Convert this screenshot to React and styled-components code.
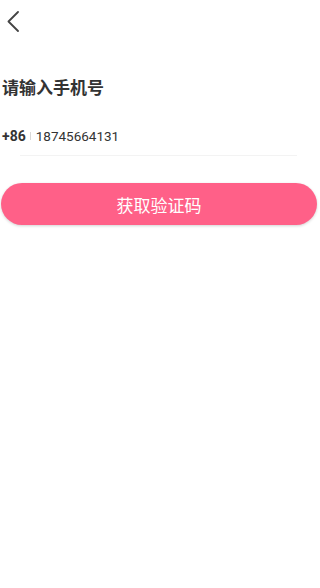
import styled, { createGlobalStyle } from "styled-components";

const Global = createGlobalStyle`
  html, body {
    margin: 0;
    padding: 0;
    background: #fff;
    font-family: Roboto, "Noto Sans CJK SC", sans-serif;
  }
`

const Page = styled.main`
  display: flex;
  flex-direction: column;
  width: 320px;
  min-height: 588px;
  background: #fff;
`

const NavBar = styled.header`
  height: 42px;
  display: flex;
  align-items: center;
  padding-left: 5px;
`

const BackButton = styled.button`
  border: none;
  background: none;
  padding: 0;
  width: 16px;
  height: 24px;
  display: flex;
  align-items: center;
  justify-content: center;
`

const Title = styled.h1`
  margin: 34px 0 0 2px;
  font-size: 17px;
  line-height: 22px;
  font-weight: bold;
  color: #333;
  font-family: "Noto Sans CJK SC", sans-serif;
`

const PhoneRow = styled.div`
  display: flex;
  align-items: center;
  margin-top: 26px;
  height: 24px;
  padding-left: 2px;
`

const Code = styled.span`
  font-size: 14px;
  font-weight: bold;
  color: #333;
`

const Sep = styled.span`
  width: 1px;
  height: 8px;
  background: #d8d8d8;
  margin: 0 5px 0 4px;
`

const Number = styled.span`
  font-size: 13.5px;
  color: #333;
`

const Underline = styled.div`
  height: 1px;
  margin: 7px 23px 0 20px;
  background: #f3f3f3;
`

const SubmitButton = styled.button`
  margin: 27px 3px 0 1px;
  height: 42px;
  border: none;
  border-radius: 21px;
  background: #ff6088;
  box-shadow: 0 1px 3px rgba(0, 0, 0, 0.18);
  color: #fff;
  font-size: 17px;
  font-family: "Noto Sans CJK SC", sans-serif;
  display: flex;
  align-items: center;
  justify-content: center;
`

export default function App() {
  return (
    <Page>
      <Global />
      <NavBar>
        <BackButton>
          <svg width="12" height="21" viewBox="0 0 12 21">
            <path d="M11 1 L1.5 10.5 L11 20" fill="none" stroke="#444" strokeWidth="1.8" strokeLinecap="round" strokeLinejoin="round" />
          </svg>
        </BackButton>
      </NavBar>
      <Title>请输入手机号</Title>
      <PhoneRow>
        <Code>+86</Code>
        <Sep />
        <Number>18745664131</Number>
      </PhoneRow>
      <Underline />
      <SubmitButton>获取验证码</SubmitButton>
    </Page>
  )
}
